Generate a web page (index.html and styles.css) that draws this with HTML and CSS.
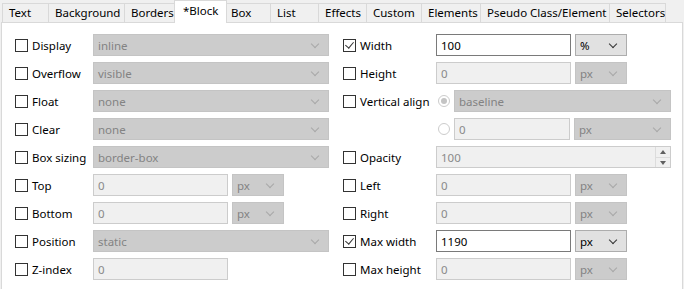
FILE: index.html
```html
<!DOCTYPE html>
<html lang="en">
<head>
    <meta charset="UTF-8">
    <title>Style Editor - Block</title>
    <link rel="stylesheet" href="styles.css">
</head>
<body>
    <div class="tabs">
        <div class="tab w-text">Text</div>
        <div class="tab w-bg">Background</div>
        <div class="tab w-borders">Borders</div>
        <div class="tab active w-block">*Block</div>
        <div class="tab w-box">Box</div>
        <div class="tab w-list">List</div>
        <div class="tab w-effects">Effects</div>
        <div class="tab w-custom">Custom</div>
        <div class="tab w-elements">Elements</div>
        <div class="tab w-pseudo">Pseudo Class/Element</div>
        <div class="tab w-selectors">Selectors</div>
    </div>
    <div class="panel">
        <div class="col col-left">
            <div class="row"><label class="lbl"><span class="cb"></span>Display</label><div class="combo off wide">inline<i class="chev"></i></div></div>
            <div class="row"><label class="lbl"><span class="cb"></span>Overflow</label><div class="combo off wide">visible<i class="chev"></i></div></div>
            <div class="row"><label class="lbl"><span class="cb"></span>Float</label><div class="combo off wide">none<i class="chev"></i></div></div>
            <div class="row"><label class="lbl"><span class="cb"></span>Clear</label><div class="combo off wide">none<i class="chev"></i></div></div>
            <div class="row"><label class="lbl"><span class="cb"></span>Box sizing</label><div class="combo off wide">border-box<i class="chev"></i></div></div>
            <div class="row"><label class="lbl"><span class="cb"></span>Top</label><div class="field off">0</div><div class="combo off unit">px<i class="chev"></i></div></div>
            <div class="row"><label class="lbl"><span class="cb"></span>Bottom</label><div class="field off">0</div><div class="combo off unit">px<i class="chev"></i></div></div>
            <div class="row"><label class="lbl"><span class="cb"></span>Position</label><div class="combo off wide">static<i class="chev"></i></div></div>
            <div class="row"><label class="lbl"><span class="cb"></span>Z-index</label><div class="field off">0</div></div>
        </div>
        <div class="col col-right">
            <div class="row"><label class="lbl"><span class="cb on"></span>Width</label><div class="field">100</div><div class="combo unit">%<i class="chev"></i></div></div>
            <div class="row"><label class="lbl"><span class="cb"></span>Height</label><div class="field off">0</div><div class="combo off unit">px<i class="chev"></i></div></div>
            <div class="row"><label class="lbl"><span class="cb"></span>Vertical align</label><span class="radio on"></span><div class="combo off valign">baseline<i class="chev"></i></div></div>
            <div class="row"><span class="lbl"></span><span class="radio"></span><div class="field off short">0</div><div class="combo off unit-wide">px<i class="chev"></i></div></div>
            <div class="row"><label class="lbl"><span class="cb"></span>Opacity</label><div class="field off spin">100<span class="spin-btns"><span class="up"></span><span class="down"></span></span></div></div>
            <div class="row"><label class="lbl"><span class="cb"></span>Left</label><div class="field off">0</div><div class="combo off unit">px<i class="chev"></i></div></div>
            <div class="row"><label class="lbl"><span class="cb"></span>Right</label><div class="field off">0</div><div class="combo off unit">px<i class="chev"></i></div></div>
            <div class="row"><label class="lbl"><span class="cb on"></span>Max width</label><div class="field">1190</div><div class="combo unit">px<i class="chev"></i></div></div>
            <div class="row"><label class="lbl"><span class="cb"></span>Max height</label><div class="field off">0</div><div class="combo off unit">px<i class="chev"></i></div></div>
        </div>
    </div>
</body>
</html>
```
FILE: styles.css
```css
body {
    margin: 0;
    background-color: #f0f0f0;
    font-family: "Noto Sans", "Open Sans", sans-serif;
    font-size: 11.5px;
    color: #000;
    height: 289px;
    overflow: hidden;
}
.tabs {
    display: flex;
    align-items: flex-end;
    height: 22px;
    padding-left: 2px;
}
.tab {
    height: 19px;
    line-height: 18px;
    box-sizing: border-box;
    border: 1px solid #d9d9d9;
    border-bottom: none;
    border-left: none;
    background-color: #f0f0f0;
    padding-left: 6px;
    white-space: nowrap;
    overflow: hidden;
}
.tab:first-child {
    border-left: 1px solid #d9d9d9;
}
.tab.active {
    height: 23px;
    margin: 0 -2px -1px -2px;
    width: 53px;
    padding-left: 8px;
    background-color: #fff;
    border-left: 1px solid #d9d9d9;
    line-height: 20px;
    position: relative;
}
.w-text { width: 47px; }
.w-bg { width: 76px; }
.w-borders { width: 51px; }
.w-block { width: 51px; }
.w-box { width: 46px; }
.w-list { width: 48px; }
.w-effects { width: 48px; }
.w-custom { width: 55px; }
.w-elements { width: 59px; }
.w-pseudo { width: 129px; }
.w-selectors { width: 56px; }

.panel {
    margin-left: 1px;
    width: 682px;
    height: 267px;
    box-sizing: border-box;
    background-color: #fff;
    border: 1px solid #d9d9d9;
    border-bottom: none;
    display: flex;
    padding: 11px 0 0 13px;
}
.col {
    display: flex;
    flex-direction: column;
    gap: 6px;
}
.col-left { width: 328px; }
.row {
    display: flex;
    align-items: center;
    height: 22px;
}
.lbl {
    display: flex;
    align-items: center;
    flex: none;
}
.col-left .lbl { width: 78px; }
.col-right .lbl { width: 93px; }
.cb {
    width: 13px;
    height: 13px;
    box-sizing: border-box;
    border: 1px solid #333;
    background: #fff;
    margin-right: 4px;
    position: relative;
}
.cb.on::after {
    content: "";
    position: absolute;
    left: 3px;
    top: 0px;
    width: 4px;
    height: 7px;
    border: solid #333;
    border-width: 0 1.3px 1.3px 0;
    transform: rotate(40deg);
}
.combo, .field {
    height: 22px;
    box-sizing: border-box;
    display: flex;
    align-items: center;
    padding-left: 4px;
    flex: none;
    position: relative;
}
.combo {
    background-color: #e1e1e1;
    border: 1px solid #adadad;
}
.combo.off {
    background-color: #cccccc;
    border-color: #c4c4c4;
    color: #838383;
}
.field {
    width: 135px;
    background-color: #fff;
    border: 1px solid #7a7a7a;
}
.field.off {
    background-color: #f0f0f0;
    border-color: #cccccc;
    color: #8a8a8a;
}
.wide { width: 236px; }
.unit { width: 52px; margin-left: 4px; }
.unit-wide { width: 97px; margin-left: 4px; }
.valign { width: 217px; }
.short { width: 116px; }
.spin { width: 235px; }
.chev {
    position: absolute;
    right: 10px;
    top: 6px;
    width: 5px;
    height: 5px;
    border: solid #333;
    border-width: 0 1px 1px 0;
    transform: rotate(45deg);
}
.combo.off .chev { border-color: #a8a8a8; }
.radio {
    width: 12px;
    height: 12px;
    box-sizing: border-box;
    border: 1px solid #cccccc;
    border-radius: 50%;
    background: #fff;
    margin: 0 4px 0 2px;
    position: relative;
}
.radio.on::after {
    content: "";
    position: absolute;
    left: 2px;
    top: 2px;
    width: 6px;
    height: 6px;
    border-radius: 50%;
    background: #c4c4c4;
}
.spin-btns {
    position: absolute;
    right: 0;
    top: 0;
    bottom: 0;
    width: 14px;
    display: flex;
    flex-direction: column;
    border-left: 1px solid #dcdcdc;
}
.spin-btns span {
    flex: 1;
    position: relative;
}
.spin-btns .up { border-bottom: 1px solid #dcdcdc; }
.spin-btns .up::after, .spin-btns .down::after {
    content: "";
    position: absolute;
    left: 4px;
    top: 3px;
    border-left: 3px solid transparent;
    border-right: 3px solid transparent;
}
.spin-btns .up::after { border-bottom: 4px solid #606060; }
.spin-btns .down::after { border-top: 4px solid #606060; }
```
